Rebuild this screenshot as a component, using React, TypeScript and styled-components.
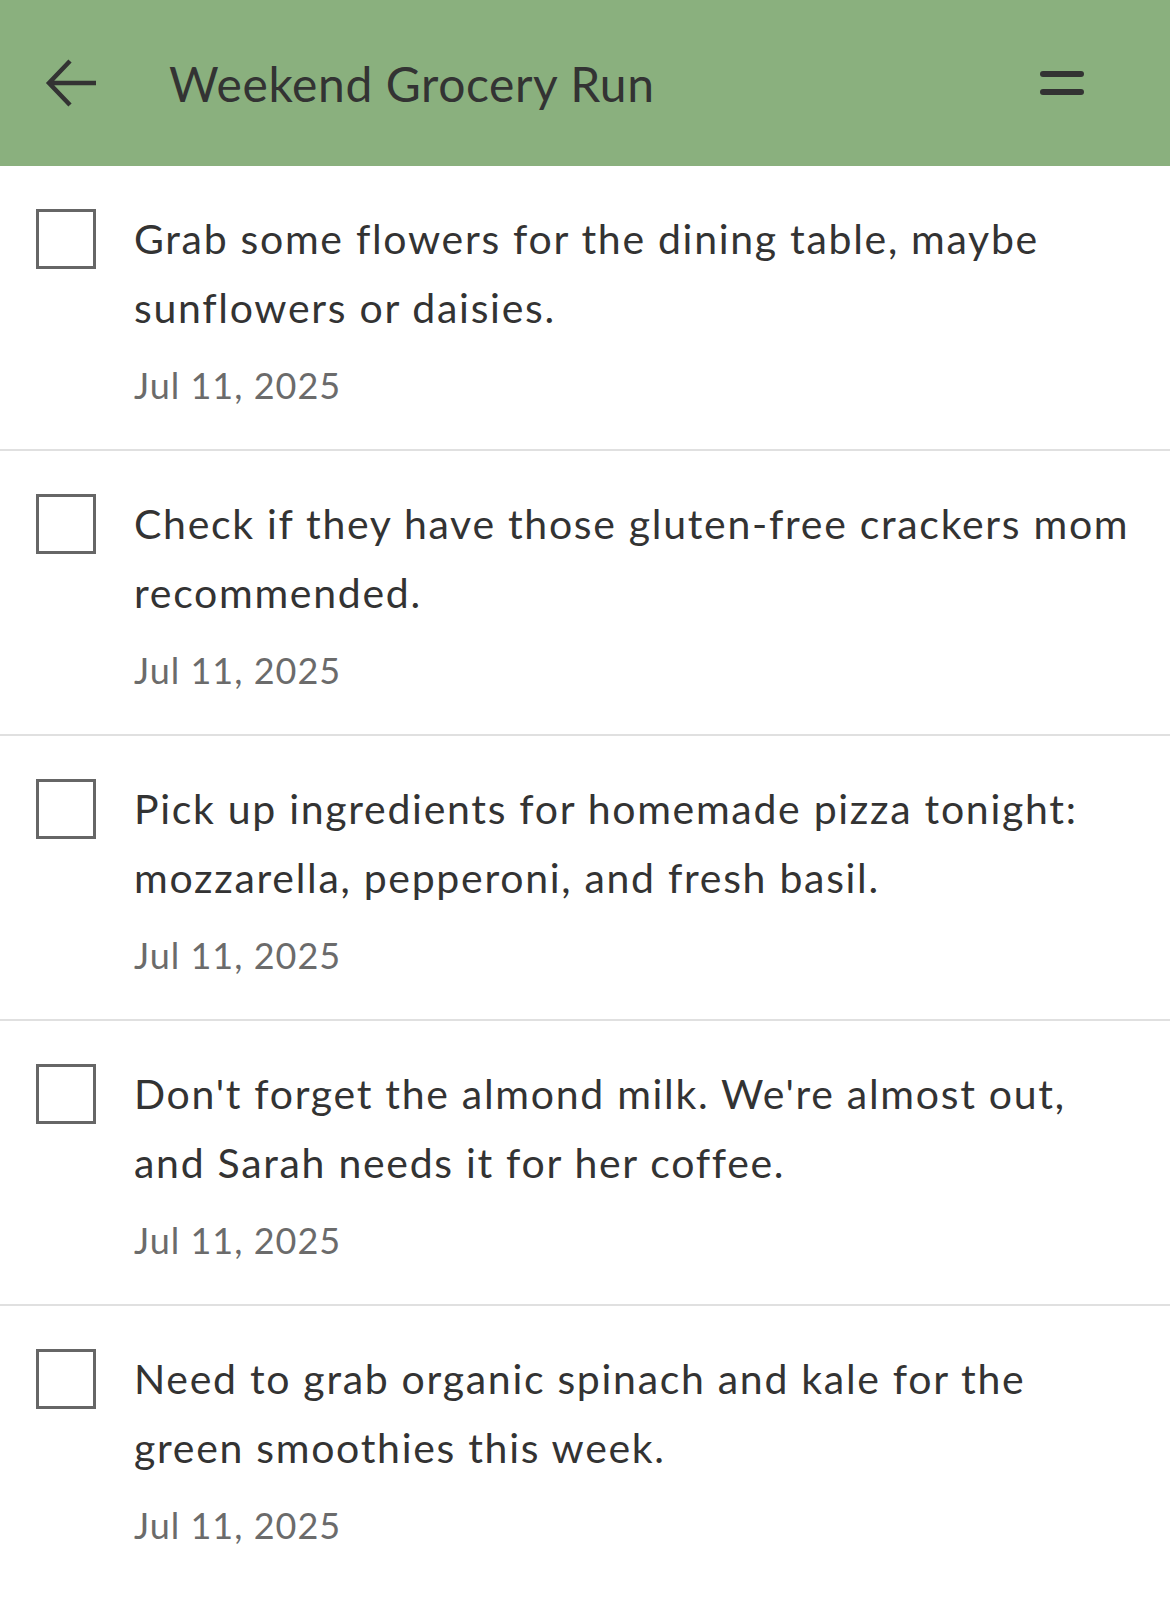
import React from "react";
import styled, { createGlobalStyle } from "styled-components";

const GlobalStyle = createGlobalStyle`
  html, body { margin: 0; padding: 0; background: #ffffff; }
  body { font-family: Lato, "Noto Sans", sans-serif; -webkit-font-smoothing: antialiased; }
  * { box-sizing: border-box; }
`;

const Page = styled.div`
  width: 1170px;
  min-height: 1599px;
  background: #ffffff;
  display: flex;
  flex-direction: column;
`;

const Header = styled.header`
  height: 166px;
  background: #8ab07e;
  display: flex;
  align-items: center;
  padding: 0 85px 0 44px;
`;

const IconButton = styled.button`
  border: 0;
  background: transparent;
  padding: 0;
  display: flex;
  align-items: center;
  justify-content: center;
  color: #333333;
  cursor: pointer;
`;

const Title = styled.h1`
  flex: 1;
  margin: 0 0 0 71px;
  font-family: Lato, "Noto Sans", sans-serif;
  font-weight: 400;
  font-size: 48px;
  color: #333333;
  letter-spacing: 0.6px;
`;

const List = styled.ul`
  list-style: none;
  margin: 0;
  padding: 0;
`;

const Row = styled.li`
  display: flex;
  align-items: flex-start;
  gap: 38px;
  padding: 39px 34px 0 36px;
  border-bottom: 2px solid #e0e0e0;
  height: 285px;

  &:last-child {
    border-bottom: 0;
  }
`;

const Box = styled.span`
  flex: none;
  width: 60px;
  height: 60px;
  margin-top: 4px;
  border: 3px solid #666666;
  background: #ffffff;
`;

const Body = styled.div`
  display: flex;
  flex-direction: column;
  flex: 1;
`;

const Text = styled.p`
  margin: 0;
  font-size: 41px;
  line-height: 68.5px;
  letter-spacing: 1.7px;
  color: #333333;
`;

const DateText = styled.span`
  margin-top: 18px;
  font-size: 36px;
  line-height: 50px;
  color: #6b6b6b;
  letter-spacing: 1px;
`;

const items = [
  "Grab some flowers for the dining table, maybe sunflowers or daisies.",
  "Check if they have those gluten-free crackers mom recommended.",
  "Pick up ingredients for homemade pizza tonight: mozzarella, pepperoni, and fresh basil.",
  "Don't forget the almond milk. We're almost out, and Sarah needs it for her coffee.",
  "Need to grab organic spinach and kale for the green smoothies this week.",
];

export default function App() {
  return (
    <>
      <GlobalStyle />
      <Page>
        <Header>
          <IconButton aria-label="Back">
            <svg width="54" height="50" viewBox="0 0 54 50" fill="none">
              <path d="M5 25 H52 M26 3 L5 25 L26 47" stroke="#333333" strokeWidth="4.5" strokeLinecap="butt" strokeLinejoin="miter" />
            </svg>
          </IconButton>
          <Title>Weekend Grocery Run</Title>
          <IconButton aria-label="Menu">
            <svg width="46" height="30" viewBox="0 0 46 30">
              <line x1="4" y1="6" x2="42" y2="6" stroke="#333333" strokeWidth="6" strokeLinecap="round" />
              <line x1="4" y1="24" x2="42" y2="24" stroke="#333333" strokeWidth="6" strokeLinecap="round" />
            </svg>
          </IconButton>
        </Header>
        <List>
          {items.map((t) => (
            <Row key={t}>
              <Box />
              <Body>
                <Text>{t}</Text>
                <DateText>Jul 11, 2025</DateText>
              </Body>
            </Row>
          ))}
        </List>
      </Page>
    </>
  );
}
